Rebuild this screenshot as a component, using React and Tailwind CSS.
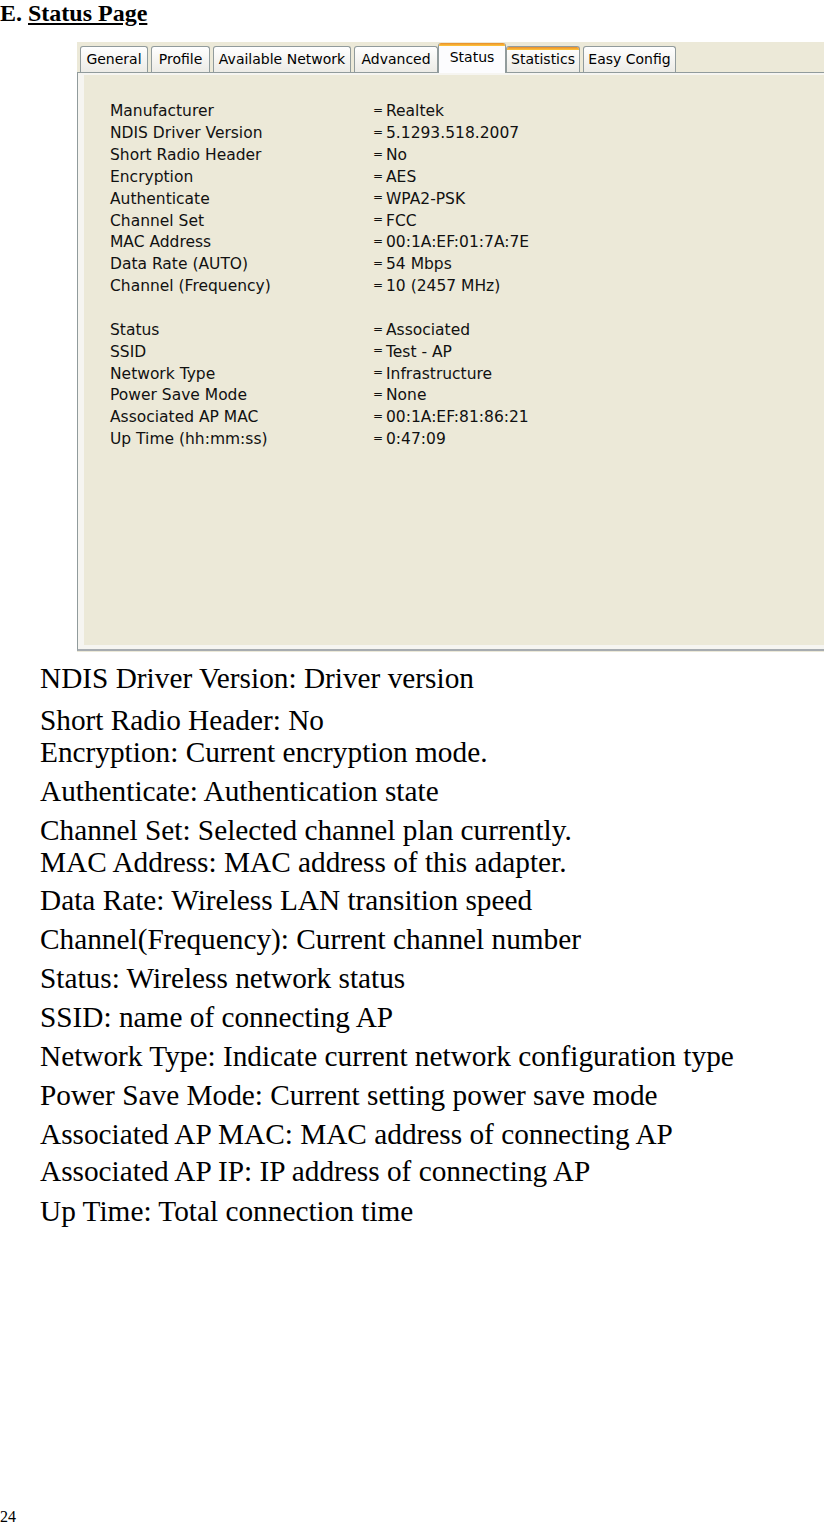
const rowsA = [
  ['Manufacturer', 'Realtek'],
  ['NDIS Driver Version', '5.1293.518.2007'],
  ['Short Radio Header', 'No'],
  ['Encryption', 'AES'],
  ['Authenticate', 'WPA2-PSK'],
  ['Channel Set', 'FCC'],
  ['MAC Address', '00:1A:EF:01:7A:7E'],
  ['Data Rate (AUTO)', '54 Mbps'],
  ['Channel (Frequency)', '10 (2457 MHz)'],
];

const rowsB = [
  ['Status', 'Associated'],
  ['SSID', 'Test - AP'],
  ['Network Type', 'Infrastructure'],
  ['Power Save Mode', 'None'],
  ['Associated AP MAC', '00:1A:EF:81:86:21'],
  ['Up Time (hh:mm:ss)', '0:47:09'],
];

// gap above each description line, measured off the page
const notes = [
  ['NDIS Driver Version: Driver version', 'mt-0'],
  ['Short Radio Header: No', 'mt-[10px]'],
  ['Encryption: Current encryption mode.', 'mt-0'],
  ['Authenticate: Authentication state', 'mt-[7px]'],
  ['Channel Set: Selected channel plan currently.', 'mt-[7px]'],
  ['MAC Address: MAC address of this adapter.', 'mt-0'],
  ['Data Rate: Wireless LAN transition speed', 'mt-[6px]'],
  ['Channel(Frequency): Current channel number', 'mt-[7px]'],
  ['Status: Wireless network status', 'mt-[7px]'],
  ['SSID: name of connecting AP', 'mt-[7px]'],
  ['Network Type: Indicate current network configuration type', 'mt-[7px]'],
  ['Power Save Mode: Current setting power save mode', 'mt-[7px]'],
  ['Associated AP MAC: MAC address of connecting AP', 'mt-[7px]'],
  ['Associated AP IP: IP address of connecting AP', 'mt-[5px]'],
  ['Up Time: Total connection time', 'mt-[8px]'],
];

function Tab({ label, active, hot, w }) {
  if (active) {
    return (
      <div className={`${w} h-[30px] -mb-px z-10 relative rounded-t-[3px] border-x border-[#919b9c] bg-[#fcfcfe] overflow-hidden`}>
        <div className="absolute inset-x-0 top-0 h-[3px] bg-gradient-to-b from-[#e68b2c] to-[#ffc73c]" />
        <div className="pt-[5px] text-center text-[14px] leading-[18px] text-black">{label}</div>
      </div>
    );
  }
  return (
    <div className={`${w} h-[26px] relative rounded-t-[3px] border border-b-0 border-[#919b9c] bg-gradient-to-b from-white to-[#ecebe6] overflow-hidden`}>
      {hot && <div className="absolute inset-x-0 top-0 h-[3px] bg-gradient-to-b from-[#e68b2c] to-[#ffc73c]" />}
      <div className="pt-[3px] text-center text-[14px] leading-[18px] text-black">{label}</div>
    </div>
  );
}

function Row({ k, v }) {
  return (
    <div className="flex h-[21.87px] items-center">
      <span className="w-[263px]">{k}</span>
      <span className="w-[13px] text-[12px] leading-[12px] -translate-y-[2px]">=</span>
      <span>{v}</span>
    </div>
  );
}

export default function App() {
  return (
    <div className="w-[824px] h-[1526px] bg-white flex flex-col text-black font-['Liberation_Serif',serif] overflow-hidden">
      <h1 className="text-[24px] font-bold leading-[27px]">
        E. <span className="underline underline-offset-2">Status Page</span>
      </h1>

      {/* XP-style property sheet */}
      <div className="ml-[77px] mt-[15px] h-[610px] bg-[#ece9d8] flex flex-col font-['DejaVu_Sans',sans-serif]">
        <div className="flex items-end gap-[3px] pl-[3px] h-[30px]">
          <Tab label="General" w="w-[68px]" />
          <Tab label="Profile" w="w-[59px]" />
          <Tab label="Available Network" w="w-[138px]" />
          <Tab label="Advanced" w="w-[84px]" />
          <div className="flex items-end -ml-[3px] -mr-[3px]">
            <Tab label="Status" w="w-[68px]" active />
          </div>
          <Tab label="Statistics" w="w-[74px]" hot />
          <Tab label="Easy Config" w="w-[93px]" />
        </div>
        <div className="h-[579px] border-l border-t border-b-2 border-[#919b9c] border-b-[#a7acb0] bg-[#ece9d8]">
          <div className="h-full border-l-[6px] border-t-[2px] border-b-[4px] border-[#f6f5f1] pt-[26px] pl-[26px] text-[15.5px] text-[#111]">
            {rowsA.map(([k, v]) => <Row key={k} k={k} v={v} />)}
            <div className="h-[21.87px]" />
            {rowsB.map(([k, v]) => <Row key={k} k={k} v={v} />)}
          </div>
        </div>
      </div>

      <div className="pl-[40px] pt-[10px] text-[29.3px] leading-[32px]">
        {notes.map(([t, m]) => (
          <div key={t} className={m}>{t}</div>
        ))}
      </div>

      <div className="mt-auto pb-[1px] text-[16px] leading-[16px]">24</div>
    </div>
  );
}
